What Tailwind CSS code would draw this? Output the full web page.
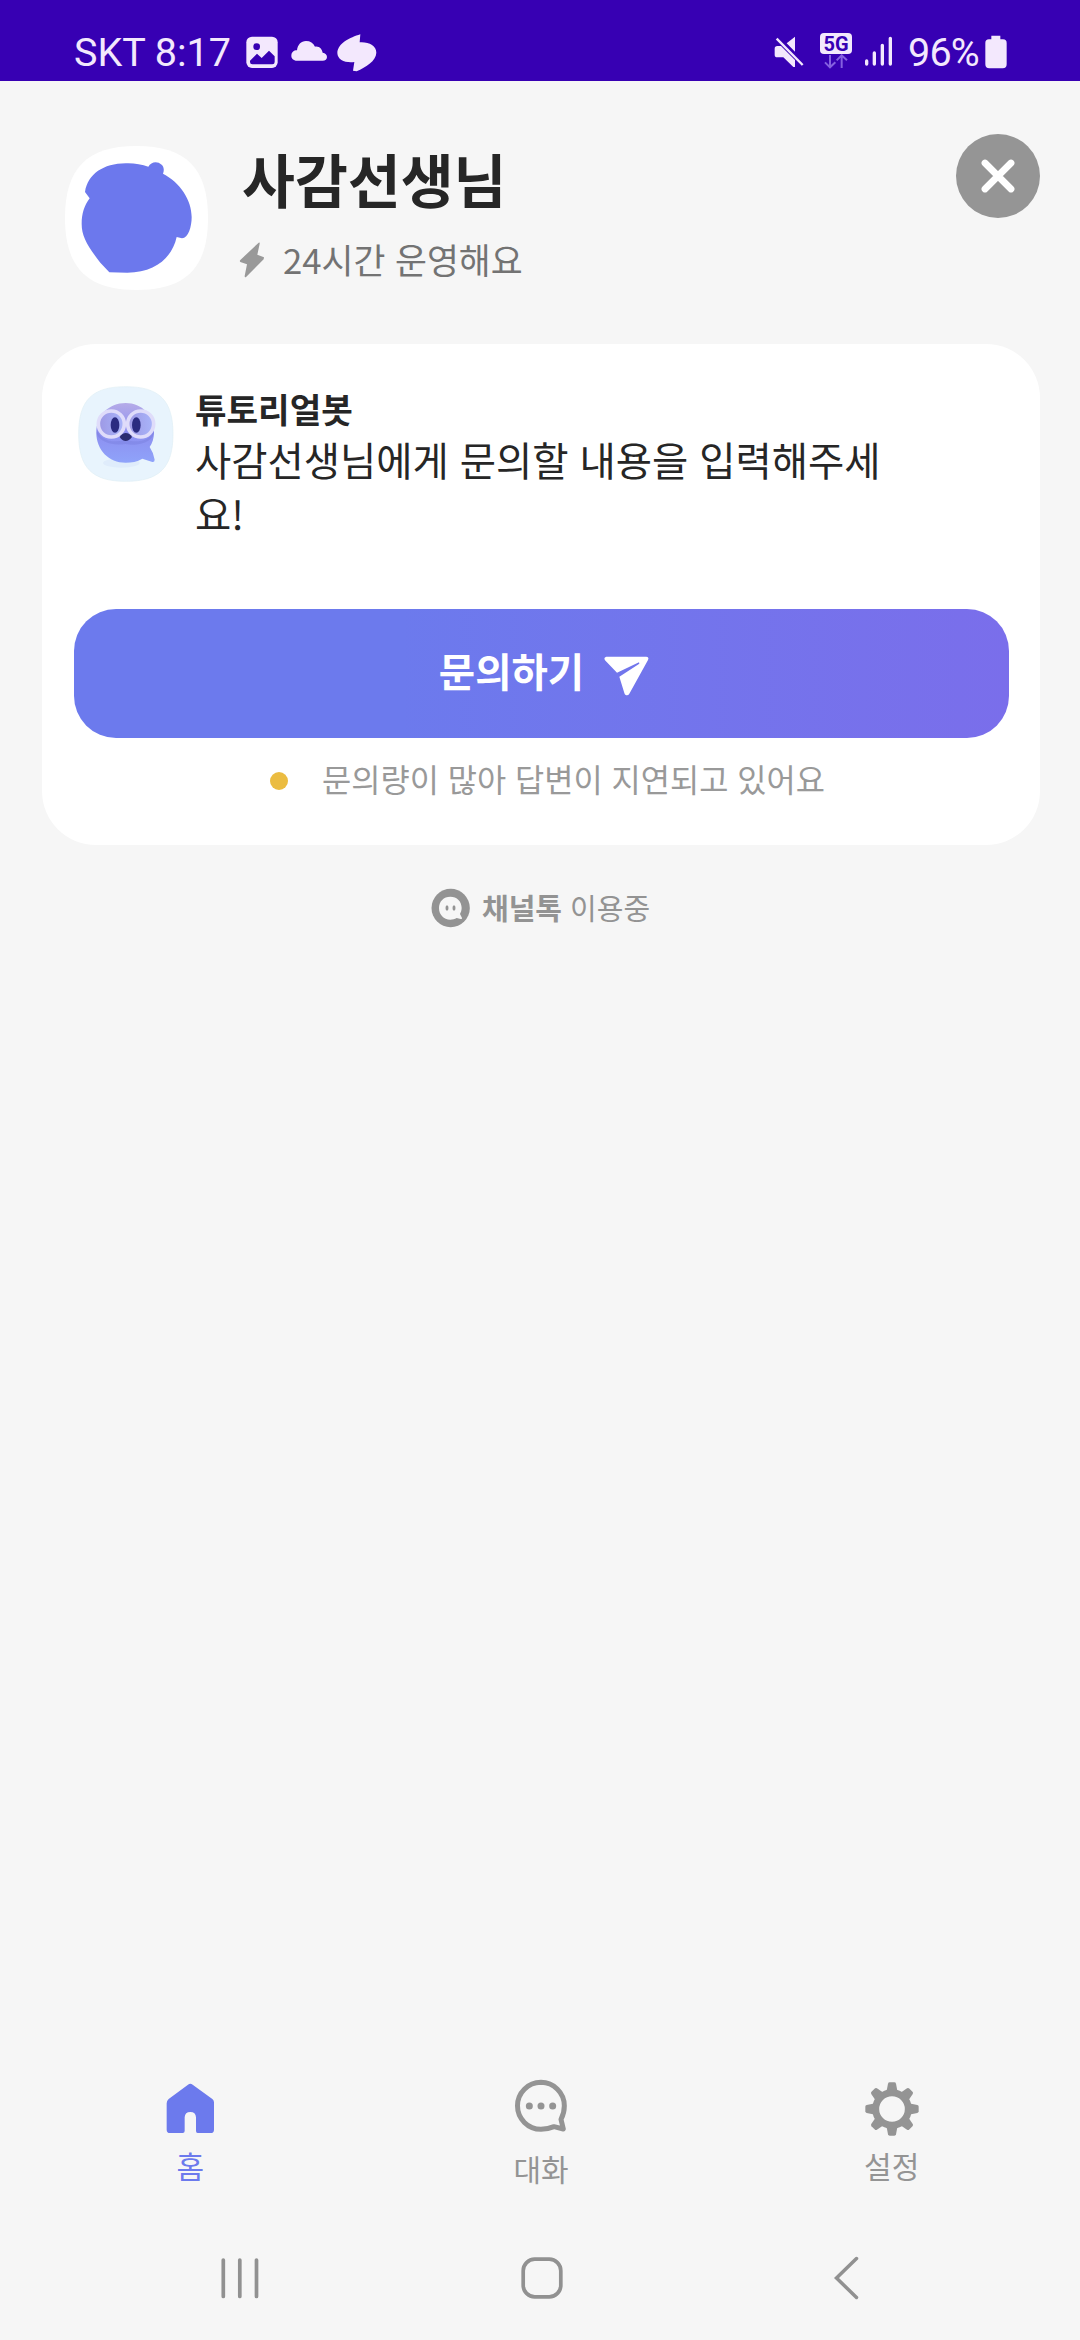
<!DOCTYPE html>
<html lang="ko">
<head>
<meta charset="utf-8">
<title>사감선생님</title>
<script src="https://cdn.jsdelivr.net/npm/@tailwindcss/browser@4"></script>
</head>
<body class="flex h-[2340px] w-[1080px] flex-col overflow-hidden bg-[#f6f6f6] font-['Noto_Sans_CJK_KR',sans-serif] text-[#262626]">

<!-- Status bar -->
<header class="flex h-[81px] shrink-0 items-start bg-[#3700b3] pl-[74px] pr-[73px] pt-[32px] font-['Roboto',sans-serif] text-[39.5px] leading-[42px] text-[#f3e8fd]">
  <span class="w-[172px] whitespace-nowrap">SKT 8:17</span>
  <svg class="mt-[4px] h-[33px] w-[33px]" viewBox="589 78 99 99"><rect x="590" y="80" width="94" height="94" rx="17" fill="currentColor"/><circle cx="621" cy="110" r="10" fill="#3700b3"/><path d="M601 152L622 131L636 144L658 122L675 139V156Q675 163 668 163H608Q601 163 601 156Z" fill="#3700b3"/></svg>
  <svg class="ml-[12px] mt-[3px] h-[33px] w-[37px]" viewBox="724 75 111 99" fill="currentColor"><path d="M742 152C731 152 725 145 725 137C725 127 732 121 742 121C744 104 754 93 769 93C782 93 791 99 796 110C809 108 817 117 819 128C827 129 832 134 832 141C832 148 827 152 819 152Z"/></svg>
  <svg class="ml-[9px] mt-[2px] h-[38px] w-[40px]" viewBox="860 71 120 114" fill="currentColor"><path d="M930 72L928 96C955 94 978 106 978 127C977 152 947 170 919 183L908 181L912 155C885 158 862 150 861 128C863 98 899 82 930 72Z"/></svg>
  <div class="flex-1"></div>
  <svg class="mt-[4px] h-[34px] w-[32px]" viewBox="74 77 96 102"><path d="M137 79V124L112 99ZM84 107H95L137 149V170L132 170L102 141H84Q76 141 76 133V115Q76 107 84 107Z" fill="currentColor"/><path d="M82 85L160 164" stroke="currentColor" stroke-width="7"/></svg>
  <div class="ml-[14px] mt-px flex w-[32px] flex-col items-center">
    <span class="flex h-[21px] w-[32px] items-center justify-center rounded-[4px] bg-[#f3e8fd] text-[20px] leading-[20px] font-bold text-[#3700b3]">5G</span>
    <svg class="h-[15px] w-[24px]" viewBox="222 131 72 45" fill="none" stroke="#8560e0" stroke-width="6"><path d="M240 134V171M225 156L240 171L256 156M275 173V135M260 150L275 135L291 150"/></svg>
  </div>
  <svg class="ml-[12px] mt-[4px] h-[31px] w-[30px]" viewBox="341 78 90 93" stroke="currentColor" stroke-width="10" stroke-linecap="round"><path d="M349 153V162M372 129V162M396 106V162M420 85V162"/></svg>
  <span class="ml-[14px] w-[72px] whitespace-nowrap tracking-[-0.8px]">96%</span>
  <svg class="ml-[5px] mt-[3px] h-[34px] w-[22px]" viewBox="704 74 66 102" fill="currentColor"><path d="M723 76H750V87H758Q769 87 769 98V162Q769 174 757 174H717Q705 174 705 162V98Q705 87 716 87H723Z"/></svg>
</header>

<main class="flex flex-1 flex-col">
  <!-- Channel header -->
  <section class="flex h-[263px] items-start pl-[65px] pr-[40px]">
    <svg class="mt-[65px] h-[144px] w-[143px]" viewBox="75 77 429 432"><path d="M289 77C440 77 504 145 504 293C504 440 440 509 289 509C140 509 75 440 75 293C75 145 140 77 289 77Z" fill="#fff"/><path d="M208 456L181 427C143 378 125 348 125 311C125 279 133 255 149 234L135 215C144 160 190 130 257 129C281 128 305 132 325 139C333 124 352 121 365 133C372 140 373 149 369 160C420 186 455 239 455 290C455 319 445 353 426 354L410 350C397 410 347 457 262 457Z" fill="#6c78ed"/></svg>
    <div class="ml-[34px] mt-[57px] flex-1">
      <h1 class="h-[81px] whitespace-nowrap text-[57.5px] leading-[81px] font-bold">사감선생님</h1>
      <p class="mt-[15px] flex h-[50px] items-center text-[34.7px] leading-[50px] text-[#737373]">
        <svg class="ml-[-3px] mr-[18px] mt-[2px] h-[36px] w-[26px]" viewBox="597 370 78 108" fill="#999"><path d="M656 372Q660 370 659 375L652 408L672 416L671 422L619 474Q614 478 614 472L621 437L601 430Q598 427 601 424Z"/></svg>24시간 운영해요
      </p>
    </div>
    <button class="mt-[53px] flex h-[84px] w-[84px] items-center justify-center rounded-full bg-[#959595]" aria-label="닫기">
      <svg class="h-[34px] w-[34px]" viewBox="0 0 34 34" stroke="#fff" stroke-width="6.800" stroke-linecap="round"><path d="M4 4L30 30M30 4L4 30"/></svg>
    </button>
  </section>

  <!-- Inquiry card -->
  <section class="ml-[42px] flex h-[501px] w-[998px] flex-col rounded-[54px] bg-white pl-[32px] pr-[31px] pt-[42px]">
    <div class="flex h-[223px] items-start pl-[4px]">
      <svg class="h-[96px] w-[96px] shrink-0" viewBox="145 166 288 288">
        <defs>
          <linearGradient id="body" x1="0" y1="0" x2="0" y2="1"><stop offset="0" stop-color="#b5abe8"/><stop offset=".5" stop-color="#8d8ff0"/><stop offset="1" stop-color="#8fa3fa"/></linearGradient>
          <linearGradient id="lens" x1="0" y1="0" x2="1" y2="0"><stop offset="0" stop-color="#9d98e4"/><stop offset="1" stop-color="#a9b5fa"/></linearGradient>
        </defs>
        <path d="M288 168C389 168 430 209 430 310C430 411 389 452 288 452C187 452 147 411 147 310C147 209 187 168 288 168Z" fill="#e8f4fd" stroke="#e0eef5" stroke-width="2"/>
        <ellipse cx="275" cy="397" rx="55" ry="14" fill="#dfecfb"/>
        <path d="M288 217C337 217 373 255 373 304C373 323 368 338 360 349Q372 367 375 387Q375 395 368 394L338 384C322 393 306 396 288 396C237 396 200 357 200 306C200 255 237 217 288 217Z" fill="url(#body)"/>
        <path d="M202 298C212 330 250 338 286 328C325 338 363 330 373 300V310C360 340 320 346 287 340C250 346 212 335 201 310Z" fill="#7377d8" opacity=".35"/>
        <circle cx="245" cy="280" r="39" fill="url(#lens)" stroke="#dfdcfa" stroke-width="11"/>
        <circle cx="333" cy="280" r="39" fill="url(#lens)" stroke="#dfdcfa" stroke-width="11"/>
        <ellipse cx="256" cy="283" rx="13" ry="23" fill="#2b2c80"/><ellipse cx="320" cy="283" rx="13" ry="23" fill="#2b2c80"/>
        <path d="M270 319Q278 307 288 307Q300 307 307 319Q298 331 288 331Q278 331 270 319Z" fill="#2b2c70"/>
      </svg>
      <div class="-mt-[2px] ml-[21px] w-[700px]">
        <h2 class="h-[48px] text-[34.3px] leading-[48px] font-bold">튜토리얼봇</h2>
        <p class="break-all text-[39.4px] leading-[54px]">사감선생님에게 문의할 내용을 입력해주세<br>요!</p>
      </div>
    </div>
    <button class="flex h-[129px] items-center justify-center rounded-[42px] bg-linear-to-r from-[#6c7aed] from-35% to-[#7a6eeb] pb-[8px] pl-[5px] text-[39.5px] font-bold text-white">
      <span>문의하기</span>
      <svg class="ml-[20px] mt-[12px] h-[40px] w-[45px]" viewBox="194 202 135 120" fill="#fff"><path d="M201 204H321Q330 204 326 214L270 315Q266 322 259 319Q256 317 255 313L240 264L300 225L299 221L233 252L197 215Q192 206 201 204Z"/></svg>
    </button>
    <p class="mt-[16px] flex h-[48px] items-center pl-[196px] text-[31.75px] leading-[48px] text-[#999]">
      <span class="mt-[5px] mr-[34px] h-[18px] w-[18px] rounded-full bg-[#ebbc41]"></span>문의량이 많아 답변이 지연되고 있어요
    </p>
  </section>

  <p class="mt-[38px] flex h-[48px] items-center pl-[431px] text-[29px] leading-[48px] text-[#939393]">
    <svg class="mr-[11px] mt-[2px] h-[40px] w-[40px]" viewBox="64 57 120 120"><circle cx="123" cy="117" r="57.500" fill="#939393"/><path d="M122 83C142 83 156 97 156 117C156 125 153 131 151 135L157 147Q158 151 153 150L141 147C135 151 129 152 122 152C102 152 88 137 88 117C88 97 102 83 122 83Z" fill="#f6f6f6"/><ellipse cx="112" cy="117" rx="4.500" ry="8" fill="#939393"/><ellipse cx="133" cy="117" rx="4.500" ry="8" fill="#939393"/></svg>
    <b class="mr-[8px] font-bold">채널톡</b><span>이용중</span>
  </p>
</main>

<!-- Tabs -->
<nav class="ml-[15px] grid h-[136px] w-[1052px] shrink-0 grid-cols-3 text-[30px] leading-[42px] text-[#949494]">
  <a class="flex flex-col items-center text-[#6c7aed]">
    <svg class="mt-[8px] h-[51px] w-[51px]" viewBox="105 69 153 153" fill="currentColor"><path d="M174 74Q181 68 188 74L247 117Q252 121 252 127V209Q252 219 242 219H203Q198 219 198 213V172Q197 156 181 156Q165 156 164 172V213Q164 219 158 219H120Q110 219 110 209V130Q110 122 116 117Z"/></svg>
    <span class="mt-[10px]">홈</span>
  </a>
  <a class="flex flex-col items-center">
    <svg class="mt-[4px] h-[54px] w-[54px]" viewBox="1154 58 162 162" fill="none" stroke="currentColor" stroke-width="15"><path stroke-linejoin="round" d="M1235 68A70.500 70.500 0 1 0 1235 209Q1257 208 1274 201L1302 208L1295 179Q1305 160 1305 138A70.500 70.500 0 0 0 1235 68Z"/><g fill="currentColor" stroke="none"><circle cx="1200" cy="139" r="10.500"/><circle cx="1235" cy="139" r="10.500"/><circle cx="1270" cy="139" r="10.500"/></g></svg>
    <span class="mt-[14px]">대화</span>
  </a>
  <a class="flex flex-col items-center">
    <svg class="mt-[7px] h-[54px] w-[54px]" viewBox="-81 -81 162 162" fill="currentColor"><defs><path id="tooth" d="M-17 -50L-12 -76Q-11 -80 -7 -80H7Q11 -80 12 -76L17 -50Z"/></defs><use href="#tooth"/><use href="#tooth" transform="rotate(45)"/><use href="#tooth" transform="rotate(90)"/><use href="#tooth" transform="rotate(135)"/><use href="#tooth" transform="rotate(180)"/><use href="#tooth" transform="rotate(225)"/><use href="#tooth" transform="rotate(270)"/><use href="#tooth" transform="rotate(315)"/><circle r="49" fill="none" stroke="currentColor" stroke-width="21"/></svg>
    <span class="mt-[8px]">설정</span>
  </a>
</nav>

<!-- System navigation -->
<footer class="flex h-[129px] shrink-0 items-start pl-[219px] pt-[44px]">
  <svg class="h-[46px] w-[42px]" viewBox="219 2255 42 46" stroke="#919191" stroke-width="3.700" stroke-linecap="round"><path d="M223.300 2260V2296.500M239.800 2260V2296.500M256.500 2260V2296.500"/></svg>
  <svg class="ml-[258px] h-[46px] w-[46px]" viewBox="519 2255 46 46" fill="none" stroke="#919191" stroke-width="3.700"><rect x="523.200" y="2259.200" width="37.600" height="37.600" rx="11.500"/></svg>
  <svg class="ml-[267px] h-[46px] w-[28px]" viewBox="831 2255 28 46" fill="none" stroke="#919191" stroke-width="3.500" stroke-linecap="round"><path d="M855.500 2258.500L835.500 2278L855.500 2297.500"/></svg>
</footer>
</body>
</html>
